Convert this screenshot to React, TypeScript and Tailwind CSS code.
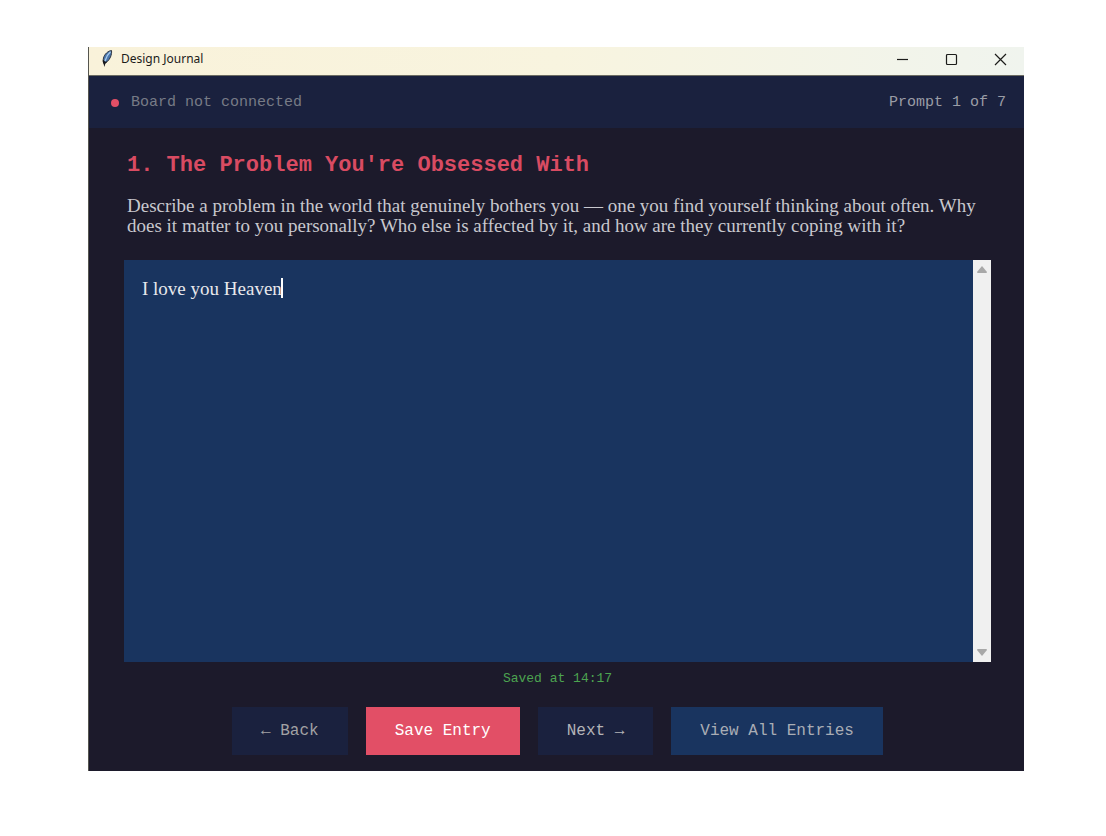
import { useState } from "react";

const mono = "font-['Courier_New','Liberation_Mono',monospace]";
const serif = "font-['Liberation_Serif',serif]";

const actions = [
    { label: "← Back", style: "bg-[#1a213e] text-[#a2a2a4]" },
    { label: "Save Entry", style: "bg-[#e24f66] text-white" },
    { label: "Next →", style: "bg-[#1a213e] text-[#b4b4b8]" },
    { label: "View All Entries", style: "bg-[#19345f] text-[#a9adb5]" },
];

function FeatherIcon() {
    return (
        <svg className="w-3 h-5" viewBox="0 0 12 20" aria-hidden="true">
            <path d="M10.5 1.5C7 2 3.500 5 2.500 9c-.5 2-.4 4 .5 5.500 2.500-1 5-3 6.500-6.500.9-2.200 1.300-4.500 1-6.500z" fill="#4a76ad" stroke="#30353f" strokeWidth="1" />
            <path d="M9.500 2.800C7 5 5 8.500 4 12" fill="none" stroke="#a9cbea" strokeWidth="1.300" />
            <path d="M2 10.500c-.4 1.800-.2 3.200.6 4.500L3.400 18l.9-3.300 2.200-2.200-2.300.3z" fill="#17181c" />
        </svg>
    );
}

function TitleBar() {
    return (
        <header className="flex items-center justify-between h-[29px] pl-3 pr-[17px] pb-1 border-b border-[#6b6b62] bg-linear-to-r from-[#f9f2da] via-[#f8f4df] to-[#f0f4ee] text-[#1c1c1a]">
            <div className="flex items-center gap-2">
                <FeatherIcon />
                <span className="font-['Noto_Sans',sans-serif] text-xs">Design Journal</span>
            </div>
            <div className="flex items-center gap-9">
                <button aria-label="Minimize">
                    <svg className="w-[13px] h-[13px]" viewBox="0 0 13 13" fill="none" stroke="currentColor" strokeWidth="1.2">
                        <path d="M1 6.500h11" />
                    </svg>
                </button>
                <button aria-label="Maximize">
                    <svg className="w-[13px] h-[13px]" viewBox="0 0 13 13" fill="none" stroke="currentColor" strokeWidth="1.2">
                        <rect x="1.500" y="1.500" width="10" height="10" rx="1" />
                    </svg>
                </button>
                <button aria-label="Close">
                    <svg className="w-[13px] h-[13px]" viewBox="0 0 13 13" fill="none" stroke="currentColor" strokeWidth="1.2">
                        <path d="M1 1l11 11M12 1L1 12" />
                    </svg>
                </button>
            </div>
        </header>
    );
}

function StatusBar() {
    return (
        <div className={`${mono} flex items-center justify-between h-[52px] pt-0.5 pl-[22px] pr-[18px] bg-[#1a213e] text-[15px]`}>
            <div className="flex items-center gap-3 text-[#777b86]">
                <span className="size-2 rounded-full bg-[#e24f66]" />
                <span>Board not connected</span>
            </div>
            <span className="text-[#9a9da6]">Prompt 1 of 7</span>
        </div>
    );
}

function Editor() {
    const [entry, setEntry] = useState("I love you Heaven");

    return (
        <div className="relative flex flex-1 bg-[#19345f]">
            <textarea
                aria-label="Journal entry"
                value={entry}
                onChange={(e) => setEntry(e.target.value)}
                className={`${serif} flex-1 resize-none outline-none px-[18px] py-[18px] text-[19px] leading-[22px] text-[#e8e8ec] caret-white`}
            />
            <span className="absolute left-[157px] top-[18px] w-0.5 h-5 bg-white" />
            <div className="flex flex-col justify-between items-center w-[18px] py-1.5 bg-[#f0f0f0]">
                <button aria-label="Scroll up">
                    <svg className="block w-2.5 h-[7px]" viewBox="0 0 10 7" fill="#a8a8a8">
                        <path d="M5 0L10 6Q10 7 9 7H1Q0 7 0 6z" />
                    </svg>
                </button>
                <button aria-label="Scroll down">
                    <svg className="block w-2.5 h-[7px]" viewBox="0 0 10 7" fill="#a8a8a8">
                        <path d="M5 7L0 1Q0 0 1 0H9Q10 0 10 1z" />
                    </svg>
                </button>
            </div>
        </div>
    );
}

export default function App() {
    return (
        <div className="flex min-h-screen bg-white pt-[47px] pr-[82px] pb-[65px] pl-[88px]">
            <div className="flex flex-1 flex-col bg-[#1c1a2b] border-l border-[#55554f]">
                <TitleBar />
                <StatusBar />
                <main className="flex flex-1 flex-col pt-6 pb-4 pl-[35px] pr-[33px]">
                    <h1 className={`${mono} px-[3px] text-[22px] leading-7 font-bold text-[#d94b62]`}>
                        1. The Problem You're Obsessed With
                    </h1>
                    <p className={`${serif} mt-4 mb-6 px-[3px] text-[19px] leading-5 text-[#c8c8ce]`}>
                        Describe a problem in the world that genuinely bothers you — one you find yourself thinking about often. Why
                        does it matter to you personally? Who else is affected by it, and how are they currently coping with it?
                    </p>
                    <Editor />
                    <p className={`${mono} mt-2 mb-[19px] text-center text-[13px] leading-[18px] text-[#4ca350]`}>Saved at 14:17</p>
                    <div className={`${mono} flex justify-center gap-[18px] text-base`}>
                        {actions.map((action) => (
                            <button key={action.label} className={`${action.style} h-12 px-[29px]`}>
                                {action.label}
                            </button>
                        ))}
                    </div>
                </main>
            </div>
        </div>
    );
}
